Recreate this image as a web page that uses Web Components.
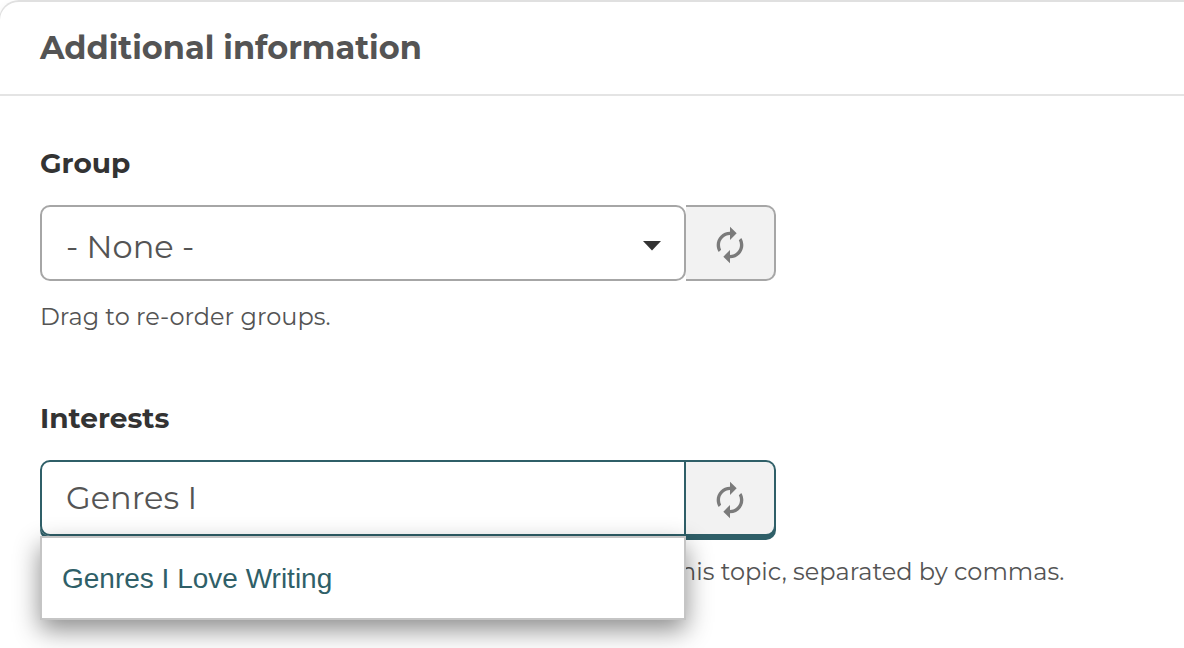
<!DOCTYPE html>
<html lang="en">
<head>
<meta charset="utf-8">
<title>Additional information</title>
<style>
body {
    margin: 0;
    overflow: hidden;
    background-color: #fff;
    font-family: Montserrat, Inter, "Open Sans", sans-serif;
    color: #545454;
}
</style>
</head>
<body>
<info-panel>
    <span slot="title">Additional information</span>
    <form-field label="Group">
        <select-box slot="control">- None -</select-box>
        <refresh-button slot="action"></refresh-button>
        <span slot="help">Drag to re-order groups.</span>
    </form-field>
    <form-field label="Interests" active>
        <tag-input slot="control" value="Genres I">
            <suggestion-list slot="menu">Genres I Love Writing</suggestion-list>
        </tag-input>
        <refresh-button slot="action" active></refresh-button>
        <span slot="help">his topic, separated by commas.</span>
    </form-field>
</info-panel>

<script>
class InfoPanel extends HTMLElement {
    connectedCallback() {
        this.attachShadow({ mode: "open" }).innerHTML = `
<style>
:host {
    display: block;
    box-sizing: border-box;
    height: 648px;
    border-top: 2px solid #e0e0e0;
    border-left: 1px solid #e0e0e0;
    border-top-left-radius: 20px;
    margin-left: -1px;
    box-shadow: 0 4px 10px rgba(0, 0, 0, 0.08);
}

header {
    box-sizing: border-box;
    height: 94px;
    padding-left: 40px;
    border-bottom: 2px solid #e4e4e4;
    font-size: 32px;
    font-weight: 700;
    line-height: 92px;
}

main {
    padding: 48px 0 0 40px;
}
</style>
<header><slot name="title"></slot></header>
<main><slot></slot></main>
`
    }
}

class FormField extends HTMLElement {
    connectedCallback() {
        this.attachShadow({ mode: "open" }).innerHTML = `
<style>
:host {
    display: block;
    height: 255px;
}

label {
    display: block;
    height: 61px;
    line-height: 38px;
    font-size: 28px;
    font-weight: 700;
    color: #333;
}

.row {
    display: flex;
    height: 76px;
}

.help {
    padding-top: 20px;
    line-height: 32px;
    font-size: 24px;
    white-space: nowrap;
}

:host([active]) .help {
    padding-left: 640px;
}
</style>
<label>${this.getAttribute("label")}</label>
<div class="row"><slot name="control"></slot><slot name="action"></slot></div>
<div class="help"><slot name="help"></slot></div>
`
    }
}

class SelectBox extends HTMLElement {
    connectedCallback() {
        this.attachShadow({ mode: "open" }).innerHTML = `
<style>
:host {
    display: flex;
    align-items: center;
    justify-content: space-between;
    box-sizing: border-box;
    width: 646px;
    padding: 6px 23px 0 24px;
    border: 2px solid #a6a6a6;
    border-radius: 10px;
    font-size: 32px;
}
</style>
<slot></slot>
<svg width="18" height="10" viewBox="0 0 18 10"><path d="M0 0h18L9 9.500z" fill="#333"/></svg>
`
    }
}

class TagInput extends HTMLElement {
    connectedCallback() {
        this.attachShadow({ mode: "open" }).innerHTML = `
<style>
:host {
    display: block;
    position: relative;
    box-sizing: border-box;
    width: 646px;
    padding-left: 24px;
    border: 2px solid #2f5f68;
    border-radius: 10px 0 0 10px;
    box-shadow: 0 4px 0 #2f5f68;
    font-size: 32px;
    line-height: 72px;
}

::slotted(suggestion-list) {
    position: absolute;
    top: 74px;
    left: -2px;
}
</style>
${this.getAttribute("value")}
<slot name="menu"></slot>
`
    }
}

class SuggestionList extends HTMLElement {
    connectedCallback() {
        this.attachShadow({ mode: "open" }).innerHTML = `
<style>
:host {
    display: block;
    box-sizing: border-box;
    width: 646px;
    height: 84px;
    padding-left: 20px;
    border: 2px solid #c5c5c5;
    background-color: #fff;
    box-shadow: 0 10px 24px rgba(0, 0, 0, 0.45);
    font-family: "Liberation Sans", Arial, sans-serif;
    font-size: 28px;
    line-height: 81px;
    color: #2f5f68;
    z-index: 1;
}
</style>
<slot></slot>
`
    }
}

class RefreshButton extends HTMLElement {
    connectedCallback() {
        this.attachShadow({ mode: "open" }).innerHTML = `
<style>
:host {
    display: flex;
    align-items: center;
    justify-content: center;
    box-sizing: border-box;
    width: 90px;
    padding-top: 3px;
    border: 2px solid #a6a6a6;
    border-left: 0;
    border-radius: 0 10px 10px 0;
    background-color: #f2f2f2;
}

:host([active]) {
    border-color: #2f5f68;
    box-shadow: 0 4px 0 #2f5f68;
}
</style>
<svg width="40" height="40" viewBox="0 0 24 24" fill="#7b7b7b">
    <path d="M12 6v3l4-4-4-4v3c-4.420 0-8 3.580-8 8 0 1.570.46 3.030 1.240 4.260L6.700 14.800c-.45-.83-.7-1.790-.7-2.800 0-3.310 2.690-6 6-6zm6.760 1.740L17.300 9.200c.44.84.7 1.790.7 2.800 0 3.310-2.690 6-6 6v-3l-4 4 4 4v-3c4.420 0 8-3.580 8-8 0-1.570-.46-3.030-1.240-4.260z"/>
</svg>
`
    }
}

customElements.define("info-panel", InfoPanel)
customElements.define("form-field", FormField)
customElements.define("select-box", SelectBox)
customElements.define("tag-input", TagInput)
customElements.define("suggestion-list", SuggestionList)
customElements.define("refresh-button", RefreshButton)
</script>
</body>
</html>
